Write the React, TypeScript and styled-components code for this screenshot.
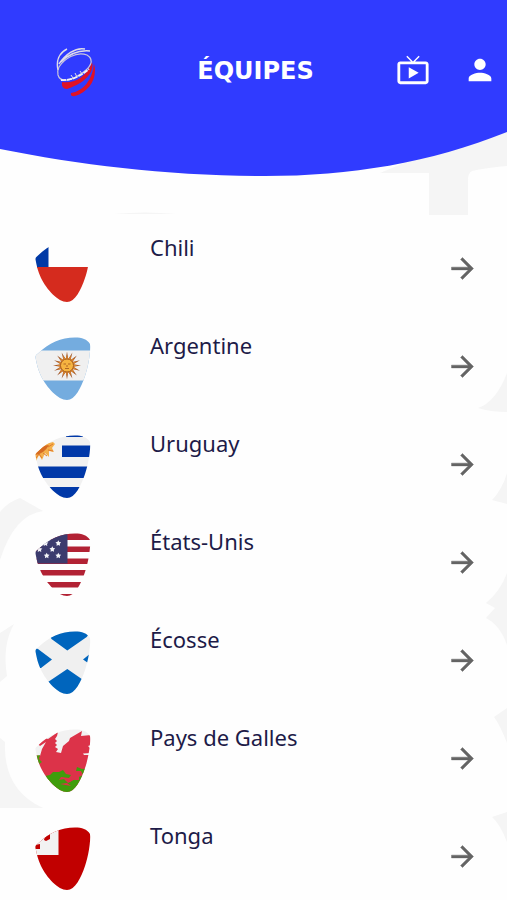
import React from "react";
import styled, { createGlobalStyle } from "styled-components";

const GlobalStyle = createGlobalStyle`
  *, *::before, *::after { box-sizing: border-box; }
  body { margin: 0; background: #fefefe; }
`;

const Page = styled.div`
  position: relative;
  min-height: 100vh;
  overflow: hidden;
  font-family: "Noto Sans", "Open Sans", sans-serif;
  color: #1d1b48;
`;

const Wash = styled.svg<{ $side: "left" | "right" }>`
  position: absolute;
  top: 0;
  ${(p) => p.$side}: 0;
  fill: #f5f5f5;
  pointer-events: none;
`;

const Header = styled.header`
  position: relative;
  height: 177px;
`;

const HeaderCurve = styled.svg`
  position: absolute;
  inset: 0;
  width: 100%;
  height: 100%;
`;

const Bar = styled.div`
  position: relative;
  display: grid;
  grid-template-columns: 1fr auto 1fr;
  align-items: center;
  height: 140px;
  padding-left: 4px;
`;

const LogoLink = styled.a`
  display: block;
  justify-self: start;
  margin-left: 52px;
  padding-top: 4px;
  svg { display: block; }
`;

const Title = styled.h1`
  margin: 0;
  padding-top: 2px;
  font: 700 24px/32px "DejaVu Sans", sans-serif;
  color: #fff;
`;

const Actions = styled.nav`
  display: flex;
  justify-self: end;
  gap: 33px;
  padding-right: 10px;
`;

const IconButton = styled.button`
  display: block;
  padding: 0;
  border: 0;
  background: none;
  color: #fff;
  cursor: pointer;
  svg { display: block; fill: currentColor; }
`;

const TeamList = styled.ul`
  position: relative;
  display: grid;
  gap: 30px;
  margin: 0;
  padding: 57px 28px 8px 35px;
  list-style: none;
`;

const TeamLink = styled.a`
  display: grid;
  grid-template-columns: 56px 1fr 33px;
  column-gap: 59px;
  align-items: center;
  height: 68px;
  color: inherit;
  text-decoration: none;
`;

const TeamName = styled.span`
  align-self: start;
  font-size: 22px;
  font-weight: 400;
  line-height: 26px;
`;

const Arrow = styled.svg`
  display: block;
  fill: #646464;
  stroke: #646464;
  stroke-width: 0.3;
`;

const SHIELD =
  "M.6 21C.2 19 1 18 3 16.500C14 6 26 .5 40 .5C47 .5 52 2 55 7C56 14 53 31 50 39C46 51 40 63 32 63C23 63 12 51 6 39C3 33 1.500 26 .6 21Z";

function sunRays(cx: number, cy: number, inner: number, outer: number, count: number) {
  const points: string[] = [];
  for (let i = 0; i < count * 2; i++) {
    const angle = (Math.PI * i) / count;
    const r = i % 2 ? inner : outer;
    points.push(`${(cx + r * Math.sin(angle)).toFixed(2)},${(cy - r * Math.cos(angle)).toFixed(2)}`);
  }
  return points.join(" ");
}

const star = (x: number, y: number) => <polygon points={sunRays(x, y, 1.6, 3, 5)} fill="#f4f4f8" />;

const flags: Record<string, React.ReactNode> = {
  cl: (
    <>
      <rect width="56" height="64" fill="#fefefe" />
      <rect width="13.500" height="29" fill="#0039a6" />
      <rect y="28" width="56" height="36" fill="#d52b1e" />
    </>
  ),
  ar: (
    <>
      <rect width="56" height="64" fill="#74acdf" />
      <rect y="13.500" width="56" height="30" fill="#f0f0f0" />
      <polygon points={sunRays(32, 28.5, 6.5, 14, 16)} fill="#a3592a" />
      <polygon points={sunRays(32, 28.5, 6.5, 10.5, 16)} fill="#d9852f" />
      <circle cx="32" cy="28.500" r="6.500" fill="#f6b440" stroke="#a85f22" strokeWidth="1" />
      <path d="M28.500 27h2.500M33 27h2.500M30 31.500h4M32 28v2" stroke="#a85f22" strokeWidth=".9" />
    </>
  ),
  uy: (
    <>
      <rect width="56" height="64" fill="#f1f1f1" />
      <path d="M31 0h17v2H31zM27 10.500h29V22H27zM0 31.500h56V43H0zM0 52h56v12H0z" fill="#0038a8" />
      <path d="M0 26V12L18 7L20 9L17 13L19 17L14 16L14 22L10 18L7 25L4 20L0 28Z" fill="#f4b04b" />
      <path d="M1 23L4 19L7 23M8 18L12 21M13 15L18 16M13 12L18 9" stroke="#e07b2c" fill="none" />
      <path d="M0 20Q9 19 14 10L7 11Z" fill="#d66b22" />
    </>
  ),
  us: (
    <>
      <rect width="56" height="64" fill="#fefefe" />
      <path d="M0 0h56v7H0zM0 13.500h56v5.500H0zM0 25.500h56v5.500H0zM0 37h56v5.500H0zM0 49h56v5.500H0zM0 61h56v3H0z" fill="#b22234" />
      <rect width="32.500" height="30.500" fill="#3c3b6e" />
      {star(23.3, 10.3)}
      {star(17.3, 16.3)}
      {star(11.7, 22.7)}
      {star(23.3, 22.7)}
      {star(10.5, 10.5)}
      {star(4.5, 16.5)}
    </>
  ),
  sc: (
    <>
      <rect width="56" height="64" fill="#f0f0f0" />
      <path
        d="M12 0L16.500 8L32.300 19.500L51.700 6L56 0ZM0 17L3 18L17 28.500L6 37L0 37ZM48 28.500L56 22V34ZM13 51L32.300 38L47.500 48.500L40 64H20Z"
        fill="#0065bd"
      />
    </>
  ),
  wa: (
    <>
      <rect width="56" height="64" fill="#f2f2f2" />
      <path
        d="M3 15L10 9L13 10L23 3L22 7L20 10L22 12L20 14L22 16L20 18L23 20L21 23L26 24L28 17L34 12L35 9L47 2L46 7L56 6V16L53 17L56 20V24L48 24.500L49 26L56 26V64H0V26L5 27L7 20L11 13L5 17Z"
        fill="#dc3349"
      />
      <path d="M0 27L5 26L4 30L7 33L4 35L0 36Z" fill="#4a9d10" />
      <path
        d="M10 47L15 46L18 43L24 43L28 41L31 45L36 46L34 49L26 48L24 51L29 50L33 54L38 51L44 51L44 48L48 46L46 42L41 42L42 38L47 40L56 39V64H10Z"
        fill="#3f9d0b"
      />
      <path d="M25 55L36 57L32 54ZM30 51L40 50L35 53Z" fill="#dc3349" />
    </>
  ),
  to: (
    <>
      <rect width="56" height="64" fill="#c10000" />
      <rect width="23.500" height="28" fill="#f2f2f2" />
      <path d="M0 18L5 17V22H0ZM9 13L10 9L15 7V12L11 14Z" fill="#c10000" />
    </>
  ),
};

function Flag({ code }: { code: string }) {
  return (
    <svg width="56" height="68" viewBox="0 -5 56 68" aria-hidden="true">
      <defs>
        <clipPath id={`shield-${code}`}>
          <path d={SHIELD} />
        </clipPath>
      </defs>
      <g clipPath={`url(#shield-${code})`}>{flags[code]}</g>
    </svg>
  );
}

function Logo() {
  return (
    <svg width="40" height="50" viewBox="57 47 40 50" fill="none" aria-hidden="true">
      <path d="M63 82C75 84 88 77 93 62C96 73 84 84 68 89Q62 89 63 82Z" fill="#e01226" />
      <path d="M72 93C84 91 93 81 95 64C99 78 90 92 76 96Q71 97 72 93Z" fill="#e01226" />
      <path d="M68 49C60 53 57 61 59 70M86 49C76 47 66 55 60 64M91 51C80 50 70 54 62 62" stroke="#dedce8" strokeWidth="1.500" />
      <path d="M60 67C65 59 77 51 88 55C96 60 92 68 80 75C70 82 61 82 59 75C58 71 59 69 60 67" stroke="#c9c6de" strokeWidth="1.200" />
      <path d="M62 80Q76 81 90 69" stroke="#f3f1f5" strokeWidth="1.800" strokeDasharray="5 1" />
      <path d="M72 75L74 78M76 73L78 77M81 71L83 74" stroke="#dedce8" />
    </svg>
  );
}

const teams = [
  { code: "cl", name: "Chili" },
  { code: "ar", name: "Argentine" },
  { code: "uy", name: "Uruguay" },
  { code: "us", name: "États-Unis" },
  { code: "sc", name: "Écosse" },
  { code: "wa", name: "Pays de Galles" },
  { code: "to", name: "Tonga" },
];

export default function App() {
  return (
    <Page>
      <GlobalStyle />
      <Wash $side="left" width="180" height="900" viewBox="0 0 180 900" aria-hidden="true">
        <path d="M114 214Q145 211 176 214Z" />
        <path d="M0 512Q8 502 20 498L43 511Q14 515 0 560Z" />
        <path d="M0 633L14 624Q2 645 7 676L0 682Z" />
        <path d="M0 738L5 742Q3 790 43 808H0Z" />
      </Wash>
      <Wash $side="right" width="127" height="900" viewBox="380 0 127 900" aria-hidden="true">
        <path d="M507 120V166Q485 168 472 171Q468 173 468 180V215H429V173H380Z" />
        <path d="M507 373Q496 402 478 408Q490 412 507 412Z" />
        <path d="M507 473Q502 490 492 500L507 504Z" />
        <path d="M507 573Q500 592 486 603L495 608L486 618Q500 625 507 645Z" />
        <path d="M507 708L494 717Q500 725 507 743Z" />
        <path d="M507 812L492 817Q500 824 507 842Z" />
      </Wash>

      <Header>
        <HeaderCurve viewBox="0 0 507 177" preserveAspectRatio="none" aria-hidden="true">
          <path d="M0 0H507V132C430 163 350 176 265 176C170 176 80 165 0 149Z" fill="#303bff" />
        </HeaderCurve>
        <Bar>
          <LogoLink href="#accueil" aria-label="Accueil">
            <Logo />
          </LogoLink>
          <Title>ÉQUIPES</Title>
          <Actions>
            <IconButton type="button" aria-label="TV">
              <svg width="34" height="34" viewBox="0 0 24 24">
                <path d="M21 6h-7.590l3.290-3.290L16 2l-4 4-4-4-.71.71L10.590 6H3c-1.100 0-2 .89-2 2v12c0 1.100.9 2 2 2h18c1.100 0 2-.9 2-2V8c0-1.110-.9-2-2-2zm0 14H3V8h18v12zM9 10v8l7-4z" />
              </svg>
            </IconButton>
            <IconButton type="button" aria-label="Profil">
              <svg width="34" height="34" viewBox="0 0 24 24">
                <path d="M12 12c2.210 0 4-1.790 4-4s-1.790-4-4-4-4 1.790-4 4 1.790 4 4 4zm0 2c-2.670 0-8 1.340-8 4v2h16v-2c0-2.660-5.330-4-8-4z" />
              </svg>
            </IconButton>
          </Actions>
        </Bar>
      </Header>

      <TeamList>
        {teams.map((team) => (
          <li key={team.code}>
            <TeamLink href={`#${team.code}`}>
              <Flag code={team.code} />
              <TeamName>{team.name}</TeamName>
              <Arrow width="33" height="33" viewBox="0 0 24 24" aria-hidden="true">
                <path d="M12 4l-1.410 1.410L16.170 11H4v2h12.170l-5.580 5.590L12 20l8-8z" />
              </Arrow>
            </TeamLink>
          </li>
        ))}
      </TeamList>
    </Page>
  );
}
